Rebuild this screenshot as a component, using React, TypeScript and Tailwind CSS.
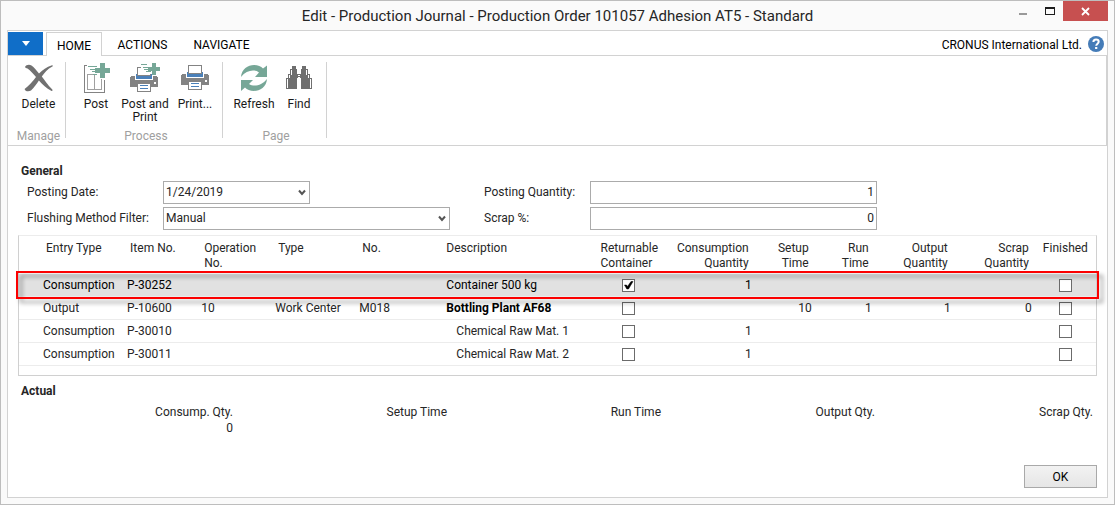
import type { ReactNode } from "react";

function DeleteIcon() {
  return (
    <svg width="30" height="30" viewBox="0 0 30 30" fill="#717171" aria-hidden="true">
      <path d="M1 4 C2 2 5 1 7.5 2.5 C10 4 12.5 7.5 15 10.5 C18.5 7 22.500 4 28 2.200 C28.800 2 29.200 3 28.400 3.400 C23.500 6 20.500 9.500 17.800 13.500 C20.500 17 23.500 21.500 28.300 26.600 C29 27.500 28.200 28.300 27.200 27.700 C22.500 25.200 18.500 21.500 14.900 17.400 C12.500 21 10 24.500 7 27.600 C4.500 29 1 28.500 0.600 26 C4.500 22.800 9 18.500 12 14 C9.500 11 6.500 7.500 3.500 5.500 C2.500 5 1.200 5 1 4 Z" />
    </svg>
  );
}

function PostIcon() {
  return (
    <svg width="30" height="30" viewBox="0 0 30 30" aria-hidden="true" shapeRendering="crispEdges">
      <path d="M6 2.500H3.500V29.500H23.500V17" fill="none" stroke="#838383" />
      <path d="M13 11.500H6.500V26.500H20.500V16M13.500 26V12" fill="none" stroke="#a0a0a0" />
      <path d="M7 3h9v1H7zM9 6h7v1H9zM11 8h4v1h-4zM12 11h4v1h-4z" fill="#76a797" />
      <path d="M19 0h5v5h5v5h-5v5h-5v-5h-5V5h5z" fill="#76a797" />
    </svg>
  );
}

function PrinterBody({ paper }: { paper: string }) {
  return (
    <>
      <path d="M2 11h26v1h1v10H1V12h1z" fill="#838383" />
      <path d="M6 9h18v6H6z" fill="#fff" />
      <path d="M7 9h16v5H7z" fill="#4a80b9" />
      <path d={paper} fill="#fff" stroke="#838383" />
      <path d="M25 17h2v2h-2z" fill="#fff" />
      <path d="M8.500 18.500h13v8h-13z" fill="#fff" stroke="#838383" />
      <path d="M11 20h8v1h-8zM11 23h8v1h-8z" fill="#4a80b9" />
    </>
  );
}

function PostPrintIcon() {
  return (
    <svg width="32" height="30" viewBox="0 0 32 30" aria-hidden="true" shapeRendering="crispEdges">
      <g transform="translate(0 2)">
        <PrinterBody paper="M8.500 10.500V2.500h13v8z" />
      </g>
      <path d="M12 1h12v10h-4l-8-6z" fill="#fff" />
      <path d="M12 1h6v1h-6zM14 4h6v1h-6zM15 6h5v1h-5zM17 8h5v1h-5z" fill="#76a797" />
      <path d="M23 0h4v4h4v4h-4v4h-4V8h-4V4h4z" fill="#76a797" />
    </svg>
  );
}

function PrintIcon() {
  return (
    <svg width="30" height="30" viewBox="0 0 30 30" aria-hidden="true" shapeRendering="crispEdges">
      <PrinterBody paper="M8.500 2.500h13v8h-13z" />
    </svg>
  );
}

function RefreshIcon() {
  return (
    <svg width="28" height="30" viewBox="0 0 28 30" fill="#76a797" aria-hidden="true">
      <path d="M1 14 C1.500 6 8 2 14 2 C18 2 21 3.500 23 5.500 L27 2.500 V14 H15 L19 9.500 C14.500 6 6.500 7 1 14 Z" />
      <path d="M27 16 C26.500 24 20 28 14 28 C10 28 7 26.500 5 24.500 L1 28 V17 H13 L9 21 C13.500 24 21.500 23 27 16 Z" />
    </svg>
  );
}

function FindIcon() {
  return (
    <svg width="28" height="30" viewBox="0 0 28 30" fill="#6f6f6f" aria-hidden="true" shapeRendering="crispEdges">
      <path d="M7 3h4v3h1v5h4V6h1V3h4v3h2v5h2v4h2v11H16V15h-1v-1h-2v1h-1v11H1V15h2v-4h2V6h2z" />
      <path d="M6 7h1v5H6zM21 7h1v5h-1zM4 12h1v3H4zM23 12h1v3h-1zM2 16h1v9H2zM25 16h1v9h-1zM13 12h2v1h-2z" fill="#fff" />
    </svg>
  );
}

function RibbonButton({ icon, label, width }: { icon: ReactNode; label: ReactNode; width: string }) {
  return (
    <button type="button" className={`flex flex-col items-center ${width}`}>
      <span className="flex h-8 items-center">{icon}</span>
      <span className="mt-1 text-center leading-[13px]">{label}</span>
    </button>
  );
}

function RibbonGroup({ caption, pad, children }: { caption: string; pad: string; children: ReactNode }) {
  return (
    <>
      <section className={`flex flex-col justify-between ${pad}`}>
        <div className="flex items-start">{children}</div>
        <div className="text-center leading-4 text-[#a0a0a0]">{caption}</div>
      </section>
      <div className="h-[76px] w-px bg-[#d2d2d2]" />
    </>
  );
}

function SelectField({ id, value, width }: { id: string; value: string; width: string }) {
  return (
    <div className={`relative ${width}`}>
      <select
        id={id}
        defaultValue={value}
        className="block h-[23px] w-full appearance-none rounded-none border border-[#ababab] bg-white pr-5 pb-0.5 pl-0.5 leading-4"
      >
        <option>{value}</option>
      </select>
      <svg className="pointer-events-none absolute top-2 right-1" width="8" height="8" viewBox="0 0 8 8" aria-hidden="true">
        <path d="M1 1.500L4 5L7 1.500" fill="none" stroke="#555" strokeWidth="2" />
      </svg>
    </div>
  );
}

function NumberField({ id, value }: { id: string; value: string }) {
  return (
    <input
      id={id}
      type="text"
      defaultValue={value}
      className="h-[23px] w-full border border-[#ababab] bg-white px-0.5 pb-0.5 text-right leading-4"
    />
  );
}

function Check({ label, checked = false }: { label: string; checked?: boolean }) {
  return (
    <span className="relative mx-auto block size-[13px]">
      <input
        type="checkbox"
        aria-label={label}
        defaultChecked={checked}
        className="peer block size-[13px] appearance-none border border-[#6b6b6b] bg-white"
      />
      <svg
        className="pointer-events-none absolute inset-0 hidden peer-checked:block"
        width="13"
        height="13"
        viewBox="0 0 13 13"
        aria-hidden="true"
      >
        <path d="M2.500 6L4.500 6L5.500 7.500L9 2.500H11L6.500 10H4.800Z" fill="#000" stroke="#000" strokeWidth="0.500" />
      </svg>
    </span>
  );
}

type Row = {
  entry: string;
  item: string;
  op?: string;
  type?: string;
  no?: string;
  desc: string;
  level: "selected" | "heading" | "child";
  returnable?: boolean;
  cons?: string;
  setup?: string;
  run?: string;
  output?: string;
  scrap?: string;
};

const rows: Row[] = [
  { entry: "Consumption", item: "P-30252", desc: "Container 500 kg", level: "selected", returnable: true, cons: "1" },
  { entry: "Output", item: "P-10600", op: "10", type: "Work Center", no: "M018", desc: "Bottling Plant AF68", level: "heading", setup: "10", run: "1", output: "1", scrap: "0" },
  { entry: "Consumption", item: "P-30010", desc: "Chemical Raw Mat. 1", level: "child", cons: "1" },
  { entry: "Consumption", item: "P-30011", desc: "Chemical Raw Mat. 2", level: "child", cons: "1" },
];

const columnWidths = [20, 84, 74, 74, 84, 84, 154, 70, 92, 60, 60, 79, 81, 60];
const columnTotal = columnWidths.reduce((a, b) => a + b, 0);

const descStyle = {
  selected: "pl-[7px] text-black",
  heading: "pl-[7px] font-bold text-black",
  child: "pl-[17px]",
};

function JournalLines() {
  const head = "px-[7px] text-left align-top font-normal";
  const headRight = "px-[7px] text-right align-top font-normal";
  return (
    <div className="relative mt-[5px] mr-[10px] ml-[10px] border border-t-[#ececec] border-r-[#d0d0d0] border-b-[#d0d0d0] border-l-[#d0d0d0] pb-[9px]">
      <table className="w-full table-fixed border-separate border-spacing-0 whitespace-nowrap">
        <colgroup>
          {columnWidths.map((w, i) => (
            <col key={i} style={{ width: `${(w / columnTotal) * 100}%` }} />
          ))}
        </colgroup>
        <thead>
          <tr className="h-[38px] leading-[15px] [&>th]:pt-[5px]">
            <td />
            <th className={head}>Entry Type</th>
            <th className={head}>Item No.</th>
            <th className={head}>Operation<br />No.</th>
            <th className={head}>Type</th>
            <th className={head}>No.</th>
            <th className={head}>Description</th>
            <th className={head}>Returnable<br />Container</th>
            <th className={headRight}>Consumption<br />Quantity</th>
            <th className={headRight}>Setup<br />Time</th>
            <th className={headRight}>Run<br />Time</th>
            <th className={headRight}>Output<br />Quantity</th>
            <th className={headRight}>Scrap<br />Quantity</th>
            <th className={head}>Finished</th>
          </tr>
        </thead>
        <tbody>
          {rows.map((r) => (
            <tr
              key={r.item}
              className={`h-[23px] leading-4 [&>td]:border-b [&>td]:border-[#ececec] [&>td]:p-0 ${r.level === "selected" ? "bg-[#e1e1e1] text-black" : ""}`}
            >
              <td />
              <td><div className="px-1">{r.entry}</div></td>
              <td><div className="px-1">{r.item}</div></td>
              <td><div className="px-1">{r.op}</div></td>
              <td><div className="px-1">{r.type}</div></td>
              <td><div className="px-1">{r.no}</div></td>
              <td><div className={descStyle[r.level]}>{r.desc}</div></td>
              <td><Check label={`${r.item} returnable container`} checked={r.returnable} /></td>
              <td><div className="px-1 text-right">{r.cons}</div></td>
              <td><div className="px-1 text-right">{r.setup}</div></td>
              <td><div className="px-1 text-right">{r.run}</div></td>
              <td><div className="px-1 text-right">{r.output}</div></td>
              <td><div className="px-1 text-right">{r.scrap}</div></td>
              <td><Check label={`${r.item} finished`} /></td>
            </tr>
          ))}
        </tbody>
      </table>
      <div className="pointer-events-none absolute top-[35px] -right-[3px] -left-[3px] h-7 border-2 border-[#fb0000] drop-shadow-[4px_4px_2px_rgba(0,0,0,0.4)]" />
    </div>
  );
}

const totals = [
  { label: "Consump. Qty.", value: "0" },
  { label: "Setup Time", value: "" },
  { label: "Run Time", value: "" },
  { label: "Output Qty.", value: "" },
  { label: "Scrap Qty.", value: "" },
];

export default function App() {
  return (
    <div className="flex min-h-screen flex-col border border-[#bdbdbd] bg-[#fafafa] pr-1.5 pb-1.5 pl-1.5 font-['Roboto',sans-serif] text-[12px] text-[#262626]">
      <header className="relative flex h-[29px] items-start justify-center">
        <h1 className="pt-[5px] text-[15px] leading-5">Edit - Production Journal - Production Order 101057 Adhesion AT5 - Standard</h1>
        <div className="absolute top-0 right-0 flex h-5">
          <button type="button" aria-label="Minimize" className="flex w-7 items-center justify-center">
            <svg width="10" height="10" viewBox="0 0 10 10" shapeRendering="crispEdges"><path d="M1 7h8v2H1z" fill="#999" /></svg>
          </button>
          <button type="button" aria-label="Maximize" className="flex w-[26px] items-center justify-center">
            <svg width="10" height="10" viewBox="0 0 10 10" shapeRendering="crispEdges"><path d="M0 1h10v8H0zM1 3v5h8V3z" fillRule="evenodd" fill="#1d1d1d" /></svg>
          </button>
          <button type="button" aria-label="Close" className="flex w-[45px] items-center justify-center bg-[#c75050]">
            <svg width="9" height="9" viewBox="0 0 9 9"><path d="M1 1L8 8M8 1L1 8" stroke="#fff" strokeWidth="1.800" /></svg>
          </button>
        </div>
      </header>

      <div className="flex grow flex-col border border-[#d2d2d2] bg-white">
        <nav className="flex h-6 items-stretch pt-px text-black">
          <button type="button" aria-label="Application menu" className="flex h-[23px] w-[35px] items-center justify-center bg-[#106ec8]">
            <svg width="8" height="5" viewBox="0 0 8 5"><path d="M0 0h8L4 5z" fill="#fff" /></svg>
          </button>
          <button type="button" className="relative z-10 -mb-px ml-[3px] w-14 border border-b-0 border-[#d2d2d2] bg-white pt-0.5">HOME</button>
          <button type="button" className="w-[81px] pt-[3px]">ACTIONS</button>
          <button type="button" className="w-[77px] pt-[3px]">NAVIGATE</button>
          <div className="ml-auto flex items-center gap-1.5 pr-[3px]">
            <span className="pt-[3px]">CRONUS International Ltd.</span>
            <button type="button" aria-label="Help">
              <svg width="16" height="16" viewBox="0 0 16 16">
                <circle cx="8" cy="8" r="8" fill="#457cb8" />
                <path d="M5.400 6C5.400 4.300 6.500 3.500 8 3.500C9.600 3.500 10.700 4.400 10.700 5.800C10.700 7.600 8.200 7.800 8.200 9.800" fill="none" stroke="#fff" strokeWidth="2" />
                <path d="M7.100 11h2.200v2H7.100z" fill="#fff" />
              </svg>
            </button>
          </div>
        </nav>

        <div className="flex h-[91px] border border-l-0 border-[#d2d2d2] pt-1.5 pb-px text-[#1a1a1a]">
          <RibbonGroup caption="Manage" pad="pl-1">
            <RibbonButton icon={<DeleteIcon />} label="Delete" width="w-[53px]" />
          </RibbonGroup>
          <RibbonGroup caption="Process" pad="pl-2 pr-1">
            <RibbonButton icon={<PostIcon />} label="Post" width="w-11" />
            <RibbonButton icon={<PostPrintIcon />} label={<>Post and<br />Print</>} width="w-[54px]" />
            <RibbonButton icon={<PrintIcon />} label="Print..." width="w-[46px]" />
          </RibbonGroup>
          <RibbonGroup caption="Page" pad="pl-2 pr-[5px]">
            <RibbonButton icon={<RefreshIcon />} label="Refresh" width="w-[46px]" />
            <RibbonButton icon={<FindIcon />} label="Find" width="w-11" />
          </RibbonGroup>
        </div>

        <main className="flex grow flex-col">
          <h2 className="mt-[17px] ml-[13px] leading-4 font-bold">General</h2>
          <div className="mt-0.5 mr-[11px] ml-[19px] grid grid-cols-[136px_287fr_34px_106px_287fr_219fr] items-center gap-y-[3px] [&>label]:pb-0.5">
            <label htmlFor="posting-date">Posting Date:</label>
            <SelectField id="posting-date" value="1/24/2019" width="w-[147px]" />
            <label htmlFor="posting-quantity" className="col-start-4">Posting Quantity:</label>
            <NumberField id="posting-quantity" value="1" />
            <label htmlFor="flushing-method" className="col-start-1">Flushing Method Filter:</label>
            <SelectField id="flushing-method" value="Manual" width="w-full" />
            <label htmlFor="scrap" className="col-start-4">Scrap %:</label>
            <NumberField id="scrap" value="0" />
          </div>

          <JournalLines />

          <h2 className="mt-[7px] ml-[13px] leading-4 font-bold">Actual</h2>
          <dl className="mt-[5px] mr-[14px] ml-[11px] grid grid-cols-[repeat(4,214fr)_218fr] text-right">
            {totals.map((t) => (
              <div key={t.label}>
                <dt className="leading-4">{t.label}</dt>
                <dd className="leading-[17px]">{t.value}</dd>
              </div>
            ))}
          </dl>

          <div className="mt-auto flex justify-end pt-4 pr-[10px] pb-[9px]">
            <button type="button" className="h-[23px] w-[73px] border border-[#a9a9a9] bg-linear-to-b from-[#f2f2f2] to-[#e6e6e6] text-black">OK</button>
          </div>
        </main>
      </div>
    </div>
  );
}
